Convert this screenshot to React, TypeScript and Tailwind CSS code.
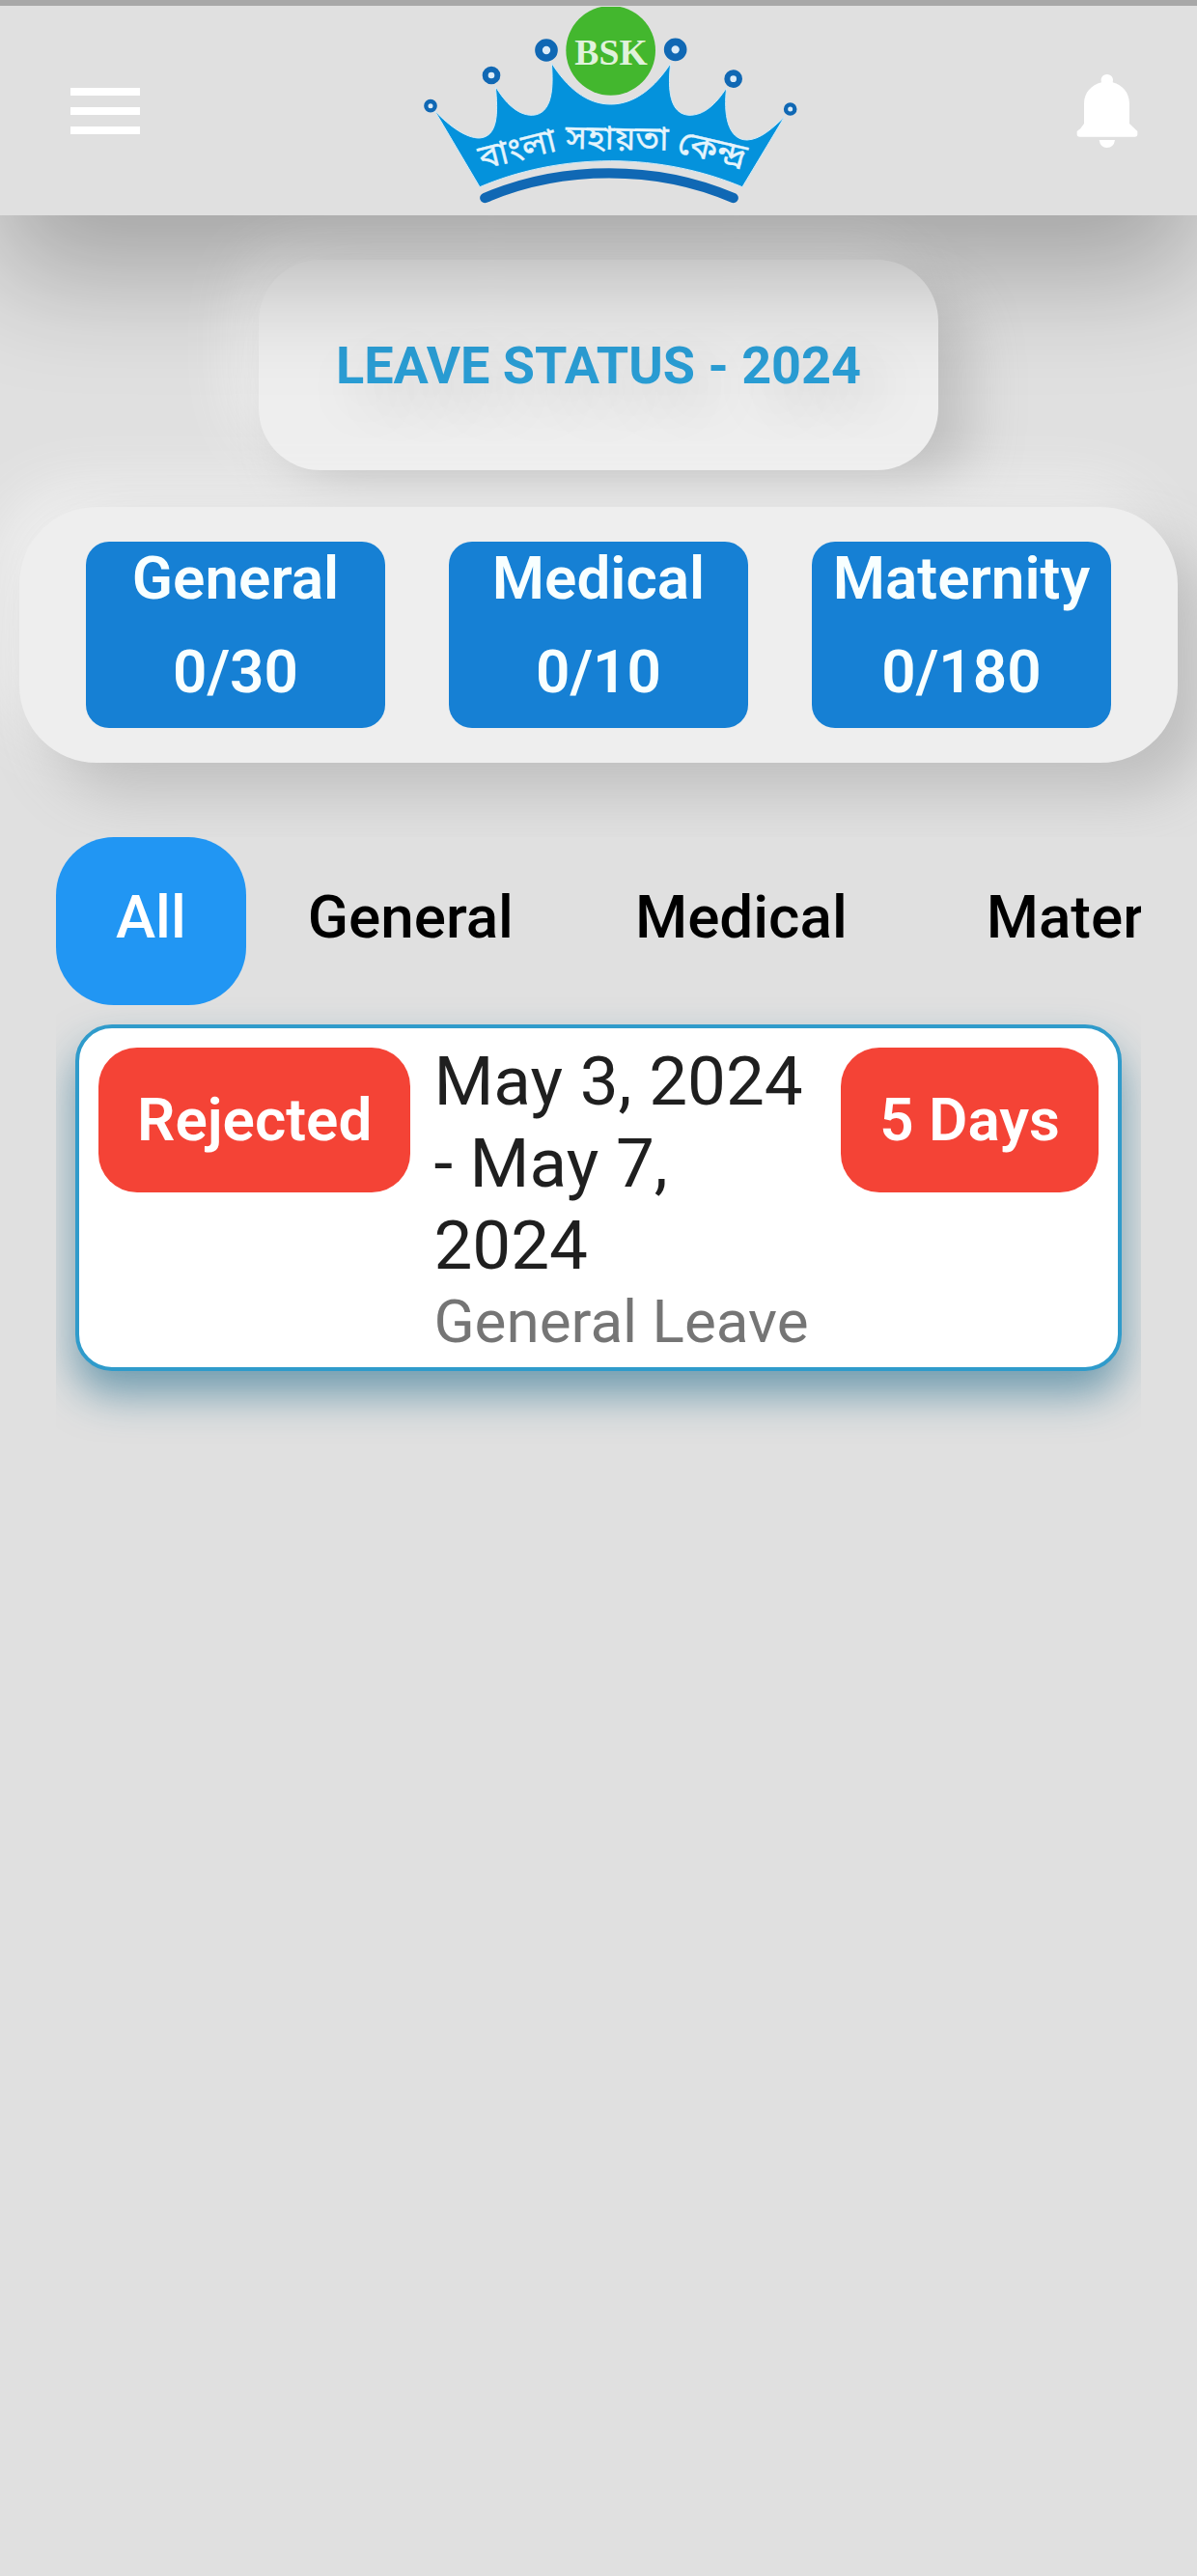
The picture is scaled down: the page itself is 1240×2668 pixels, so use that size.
import { useState } from "react";

const balances = [
  { label: "General", value: "0/30" },
  { label: "Medical", value: "0/10" },
  { label: "Maternity", value: "0/180" },
];

const tabs = ["All", "General", "Medical", "Maternity"];

const requests = [
  { status: "Rejected", dates: "May 3, 2024 - May 7, 2024", type: "General Leave", days: "5 Days" },
];

const rings = [
  { x: 80, y: 328, r: 14, w: 13 },
  { x: 269, y: 233, r: 19, w: 18 },
  { x: 440, y: 155, r: 24, w: 23 },
  { x: 841, y: 153, r: 24, w: 23 },
  { x: 1021, y: 244, r: 19, w: 18 },
  { x: 1198, y: 338, r: 14, w: 13 },
];

function Logo() {
  return (
    <svg
      viewBox="59 20 1161 612"
      className="h-[204px] w-[387px]"
      role="img"
      aria-label="BSK বাংলা সহায়তা কেন্দ্র"
    >
      <path
        d="M93 343 C140 392 190 428 232 428 C290 424 290 350 282 268 C312 318 350 357 396 357 C460 354 462 270 456 195 C505 272 565 323 640 323 C715 323 778 270 826 196 C816 280 824 354 884 357 C930 357 965 325 1000 272 C990 350 1002 434 1064 434 C1105 432 1140 400 1180 362 L1049 580 C930 530 790 499 640 499 C490 499 350 530 233 580 Z"
        fill="#0492dc"
        stroke="#d3ebf8"
        strokeWidth="3"
      />
      <path
        d="M249 614 C370 562 500 537 635 537 C770 537 900 562 1021 614"
        fill="none"
        stroke="#1068b4"
        strokeWidth="31"
        strokeLinecap="round"
      />
      {rings.map((c) => (
        <circle key={c.x} cx={c.x} cy={c.y} r={c.r} fill="#dcecf8" stroke="#1068b4" strokeWidth={c.w} />
      ))}
      <circle cx="640" cy="156" r="139" fill="#43b72e" />
      <g textAnchor="middle" fontFamily="'Liberation Serif', serif" fontWeight="700">
        <text x="641" y="201" fontSize="113" fill="#e0f2dc">
          BSK
        </text>
      </g>
      <g
        textAnchor="middle"
        fill="#e4f4fc"
        stroke="#e4f4fc"
        strokeWidth="1"
        fontFamily="'Noto Sans Bengali', 'Noto Serif Bengali', 'Noto Sans', sans-serif"
        fontSize="106"
      >
        <text transform="translate(358 496) rotate(-14)">বাংলা</text>
        <text transform="translate(659 464) rotate(1)">সহায়তা</text>
        <text transform="translate(948 498) rotate(13)">কেন্দ্র</text>
      </g>
    </svg>
  );
}

function Header() {
  return (
    <header className="relative z-10 flex items-center justify-between border-t-[6px] border-[#a8a8a8] bg-[#e0e0e0] pt-px pr-[45px] pb-3 pl-[61px] shadow-[0_60px_120px_rgba(0,0,0,0.27)]">
      <button type="button" aria-label="Open menu" className="mt-3 pr-2">
        <svg viewBox="0 0 24 24" className="size-24" fill="#ffffff">
          <path d="M3 18h18v-2H3v2zm0-5h18v-2H3v2zm0-7v2h18V6H3z" />
        </svg>
      </button>
      <Logo />
      <button type="button" aria-label="Notifications" className="mt-3">
        <svg viewBox="178 202 288 288" className="size-24" fill="#ffffff">
          <path d="M304 257 C300 243 308 232 321 232 C335 232 343 243 339 257 C370 266 390 288 391 322 V385 L416 409 V418 Q416 426 408 426 H236 Q228 426 228 418 V409 Q240 402 250 385 V322 C251 288 272 266 304 257 Z" />
          <path d="M297 436 H346 Q342 460 321 460 Q301 460 297 436 Z" />
        </svg>
      </button>
    </header>
  );
}

export default function App() {
  const [active, setActive] = useState("All");

  return (
    <div className="min-h-screen overflow-hidden bg-[#e0e0e0] font-['Roboto',sans-serif]">
      <Header />
      <main>
        <section className="px-5 pt-[46px]">
          <h1 className="mx-auto w-fit rounded-[64px] bg-[#eeeeee] px-20 pt-[78px] pb-[76px] text-[54px] leading-[64px] font-bold text-[#2a9dd4] shadow-[30px_30px_60px_#bebebe,-20px_-20px_60px_#f1f1f1] [text-shadow:20px_20px_60px_rgba(0,0,0,0.2)]">
            LEAVE STATUS - 2024
          </h1>
          <div className="mt-[38px] flex justify-center gap-[66px] rounded-[80px] bg-[#eeeeee] py-9 shadow-[30px_30px_60px_#bebebe,-20px_-20px_60px_#f1f1f1]">
            {balances.map((b) => (
              <div
                key={b.label}
                className="flex w-[310px] flex-col items-center gap-6 rounded-3xl bg-[#1680d4] pt-px pb-[22px] text-[62px] leading-[73px] font-semibold text-[#f8ffff]"
              >
                <span>{b.label}</span>
                <span>{b.value}</span>
              </div>
            ))}
          </div>
        </section>

        <section className="relative mt-[77px] bg-[#e0e0e0] px-[58px]">
          <div className="overflow-hidden">
            <div role="tablist" className="flex gap-0.5">
              {tabs.map((t) => (
                <button
                  key={t}
                  type="button"
                  role="tab"
                  aria-selected={t === active}
                  onClick={() => setActive(t)}
                  className={
                    t === active
                      ? "shrink-0 rounded-[60px] bg-[#2196f3] px-[62px] pt-[46px] pb-[54px] text-[62px] leading-[74px] font-medium text-white"
                      : "shrink-0 rounded-[60px] px-[62px] pt-[46px] pb-[54px] text-[62px] leading-[74px] font-medium text-black last:pl-20"
                  }
                >
                  {t}
                </button>
              ))}
            </div>
            <ul className="px-5 pt-5 pb-24">
              {requests.map((r) => (
                <li
                  key={r.dates}
                  className="flex items-start rounded-[38px] border-4 border-[#2f9bcb] bg-white px-5 pt-3 pb-2.5 shadow-[0_24px_44px_rgba(20,100,135,0.55)]"
                >
                  <span className="mt-2 rounded-[40px] bg-[#f44336] px-10 py-[38px] text-[62px] leading-[74px] font-semibold text-white">
                    {r.status}
                  </span>
                  <div className="min-w-0 flex-1 px-6">
                    <p className="text-[71px] leading-[85px] text-[#1f1f1f]">{r.dates}</p>
                    <p className="text-[62px] leading-[74px] text-[#757575]">{r.type}</p>
                  </div>
                  <span className="mt-2 rounded-[40px] bg-[#f44336] px-10 py-[38px] text-[62px] leading-[74px] font-semibold text-white">
                    {r.days}
                  </span>
                </li>
              ))}
            </ul>
          </div>
        </section>
      </main>
    </div>
  );
}
